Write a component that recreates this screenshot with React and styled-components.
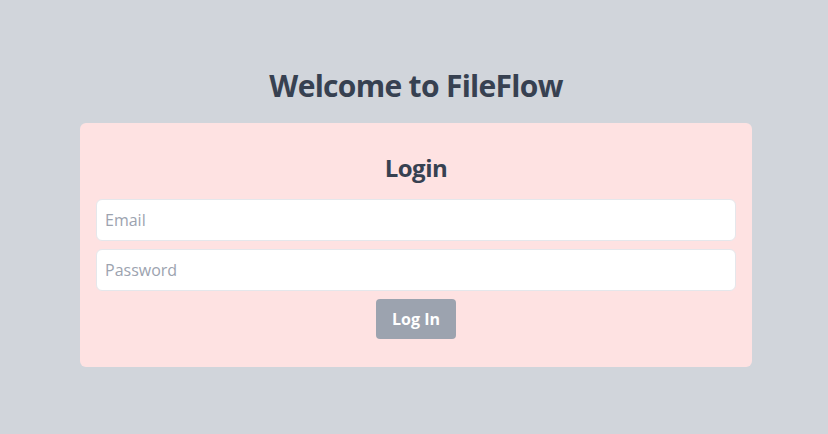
import React from "react";
import styled, { createGlobalStyle } from "styled-components";

const Global = createGlobalStyle`
  * { box-sizing: border-box; }
  html, body { margin: 0; padding: 0; }
  body {
    background: #d1d5db;
    font-family: "Open Sans", "Noto Sans", sans-serif;
    color: #374151;
  }
`;

const Page = styled.main`
  min-height: 434px;
  display: flex;
  flex-direction: column;
  align-items: center;
  padding: 68px 0 0 4px;
`;

const Title = styled.h1`
  margin: 0 0 19px;
  font-size: 30px;
  line-height: 36px;
  font-weight: 700;
  letter-spacing: -0.7px;
  color: #374151;
`;

const Card = styled.section`
  width: 672px;
  background: #fee2e2;
  border-radius: 6px;
  padding: 16px 16px 28px;
  display: flex;
  flex-direction: column;
  align-items: center;
`;

const Heading = styled.h2`
  margin: 13px 0 15px;
  font-size: 24px;
  line-height: 32px;
  font-weight: 700;
  letter-spacing: -0.5px;
  color: #374151;
`;

const Form = styled.form`
  width: 100%;
  display: flex;
  flex-direction: column;
  align-items: center;
  gap: 8px;
`;

const Input = styled.input`
  width: 100%;
  height: 42px;
  padding: 8px;
  border: 1px solid #e5e7eb;
  border-radius: 6px;
  background: #ffffff;
  font-family: inherit;
  font-size: 16px;
  line-height: 24px;
  color: #374151;
  outline: none;
  &::placeholder { color: #9ca3af; }
`;

const Button = styled.button`
  height: 40px;
  width: 80px;
  padding: 8px 0;
  border: none;
  border-radius: 4px;
  background: #9ca3af;
  color: #ffffff;
  font-family: inherit;
  font-size: 16px;
  line-height: 24px;
  font-weight: 700;
  cursor: pointer;
`;

export default function App() {
  return (
    <>
      <Global />
      <Page>
        <Title>Welcome to FileFlow</Title>
        <Card>
          <Heading>Login</Heading>
          <Form onSubmit={(e) => e.preventDefault()}>
            <Input type="email" placeholder="Email" />
            <Input type="password" placeholder="Password" />
            <Button type="submit">Log In</Button>
          </Form>
        </Card>
      </Page>
    </>
  );
}
